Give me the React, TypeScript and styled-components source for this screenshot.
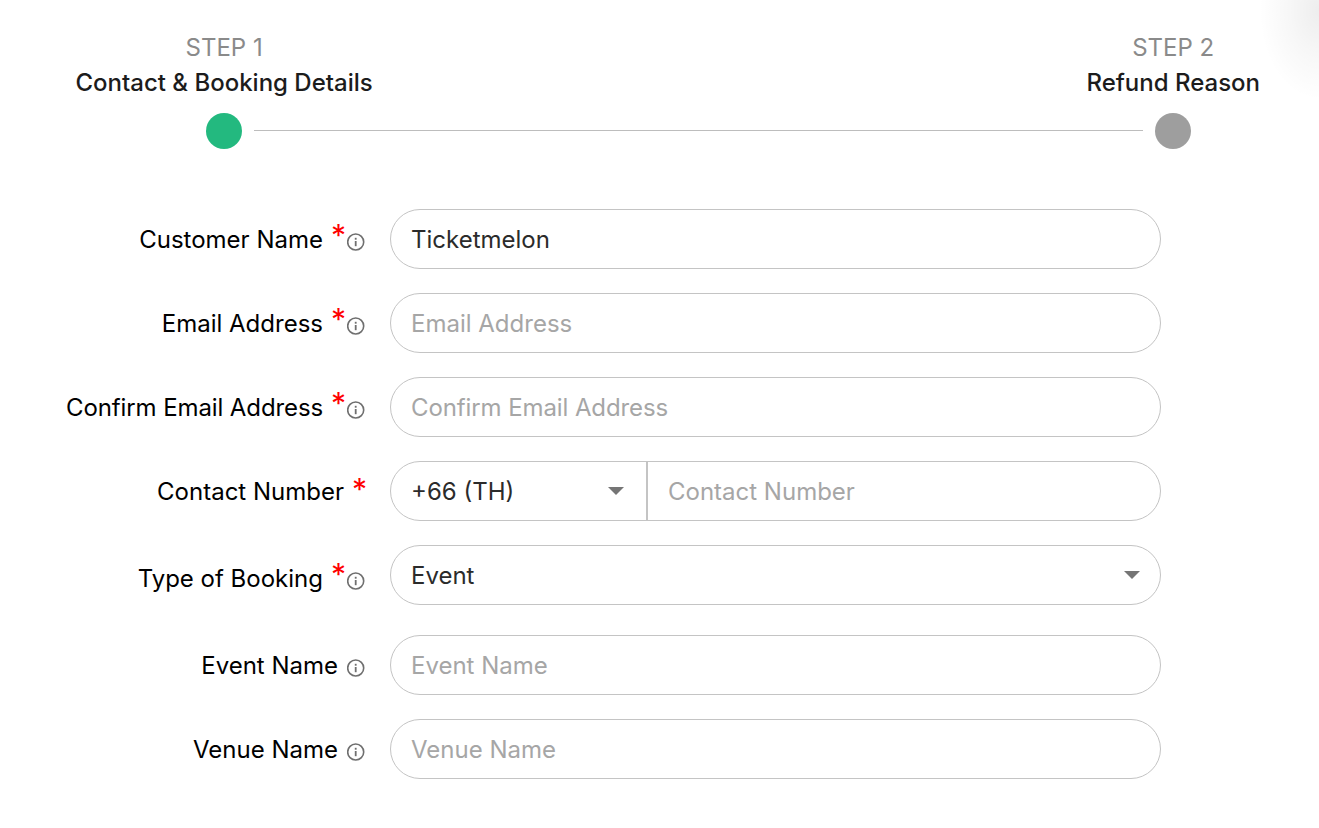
import React from 'react'
import styled, { createGlobalStyle } from 'styled-components'

const GlobalStyle = createGlobalStyle`
  html, body {
    margin: 0;
    padding: 0;
    background: #fff;
    font-family: Inter, 'Noto Sans', sans-serif;
  }
  * {
    box-sizing: border-box;
  }
`

const Page = styled.div`
  position: relative;
  width: 1319px;
  height: 828px;
  overflow: hidden;
  background: #fff;
`

const CornerShade = styled.div`
  position: absolute;
  top: -80px;
  right: -60px;
  width: 120px;
  height: 180px;
  background: radial-gradient(ellipse closest-side, rgba(0, 0, 0, 0.07) 0%, rgba(0, 0, 0, 0.03) 50%, rgba(0, 0, 0, 0) 100%);
`

const Stepper = styled.div`
  display: flex;
  align-items: flex-end;
  padding: 33px 59px 0 75.5px;
`

const Step = styled.div`
  display: flex;
  flex-direction: column;
  align-items: center;
  flex-shrink: 0;
`

const StepNumber = styled.div`
  font-size: 24px;
  line-height: 30px;
  color: #8a8a8a;
`

const StepTitle = styled.div`
  margin-top: 5px;
  font-size: 24px;
  font-weight: 500;
  line-height: 30px;
  color: #1c1c1c;
`

const Dot = styled.div<{ $active?: boolean }>`
  width: 36px;
  height: 36px;
  margin-top: 15px;
  border-radius: 50%;
  background: ${({ $active }) => ($active ? '#23b97f' : '#9e9e9e')};
`

// the line runs under the step titles, from dot to dot
const Line = styled.div`
  flex: 1;
  height: 1px;
  margin: 0 -57px 18px -118.5px;
  background: #bdbdbd;
`

const Form = styled.form`
  display: flex;
  flex-direction: column;
  gap: 24px;
  margin-top: 60px;
`

const Row = styled.div<{ $spaced?: boolean }>`
  display: flex;
  align-items: center;
  margin-bottom: ${({ $spaced }) => ($spaced ? '6px' : '0')};
`

const Label = styled.label<{ $drop?: number; $tight?: boolean }>`
  display: flex;
  align-items: center;
  justify-content: flex-end;
  width: 365px;
  margin-right: 25px;
  padding-top: ${({ $drop }) => $drop ?? 2}px;
  flex-shrink: 0;
  font-size: 24px;
  line-height: 30px;
  letter-spacing: ${({ $tight }) => ($tight ? '-0.1px' : '0')};
  color: #000;
  white-space: nowrap;
`

const Star = styled.span<{ $last?: boolean }>`
  margin-left: 8px;
  margin-right: ${({ $last }) => ($last ? '-2px' : '0')};
  margin-top: ${({ $last }) => ($last ? '-6px' : '-10px')};
  font-size: 30px;
  line-height: 30px;
  height: 30px;
  color: #f00;
`

const InfoIcon = styled.svg<{ $gap?: boolean }>`
  width: 18px;
  height: 18px;
  margin-left: ${({ $gap }) => ($gap ? '9px' : '1px')};
  margin-top: 3px;
  color: #6f6f6f;
  flex-shrink: 0;
`

const Field = styled.div`
  display: flex;
  align-items: center;
  width: 771px;
  height: 60px;
  border: 1px solid #c4c4c4;
  border-radius: 30px;
  background: #fff;
  font-size: 24px;
`

const TextInput = styled.input<{ $tight?: boolean }>`
  flex: 1;
  min-width: 0;
  height: 100%;
  padding: 0 20px;
  border: 0;
  outline: 0;
  background: transparent;
  font: inherit;
  letter-spacing: ${({ $tight }) => ($tight ? '-0.1px' : '0')};
  color: #2b2b2b;

  &::placeholder {
    color: #a6a6a6;
    opacity: 1;
  }
`

const Prefix = styled.div`
  display: flex;
  align-items: center;
  justify-content: space-between;
  width: 257px;
  height: 100%;
  flex-shrink: 0;
  padding: 0 22px 0 20px;
  border-right: 2px solid #c4c4c4;
  color: #2b2b2b;
`

const SelectValue = styled.div`
  display: flex;
  align-items: center;
  justify-content: space-between;
  width: 100%;
  height: 100%;
  padding: 0 20px;
  color: #2b2b2b;
`

const Caret = styled.span`
  width: 0;
  height: 0;
  border-left: 8px solid transparent;
  border-right: 8px solid transparent;
  border-top: 8px solid #757575;
`

const Info: React.FC<{ gap?: boolean }> = ({ gap }) => (
  <InfoIcon $gap={gap} viewBox="0 0 18 18" fill="none">
    <circle cx="8.7" cy="9" r="8" stroke="currentColor" strokeWidth="1.6" />
    <rect x="7.8" y="8" width="1.8" height="5.2" fill="currentColor" />
    <rect x="7.8" y="4.8" width="1.8" height="1.9" fill="currentColor" />
  </InfoIcon>
)

const App: React.FC = () => {
  return (
    <Page>
      <GlobalStyle />
      <CornerShade />
      <Stepper>
        <Step>
          <StepNumber>STEP 1</StepNumber>
          <StepTitle>Contact &amp; Booking Details</StepTitle>
          <Dot $active />
        </Step>
        <Line />
        <Step>
          <StepNumber>STEP 2</StepNumber>
          <StepTitle>Refund Reason</StepTitle>
          <Dot />
        </Step>
      </Stepper>
      <Form>
        <Row>
          <Label>
            Customer Name<Star>*</Star>
            <Info />
          </Label>
          <Field>
            <TextInput defaultValue="Ticketmelon" />
          </Field>
        </Row>
        <Row>
          <Label>
            Email Address<Star>*</Star>
            <Info />
          </Label>
          <Field>
            <TextInput placeholder="Email Address" />
          </Field>
        </Row>
        <Row>
          <Label $tight>
            Confirm Email Address<Star>*</Star>
            <Info />
          </Label>
          <Field>
            <TextInput $tight placeholder="Confirm Email Address" />
          </Field>
        </Row>
        <Row>
          <Label>
            Contact Number<Star $last>*</Star>
          </Label>
          <Field>
            <Prefix>
              +66 (TH)
              <Caret />
            </Prefix>
            <TextInput placeholder="Contact Number" />
          </Field>
        </Row>
        <Row $spaced>
          <Label $drop={8}>
            Type of Booking<Star>*</Star>
            <Info />
          </Label>
          <Field>
            <SelectValue>
              Event
              <Caret />
            </SelectValue>
          </Field>
        </Row>
        <Row>
          <Label>
            Event Name
            <Info gap />
          </Label>
          <Field>
            <TextInput placeholder="Event Name" />
          </Field>
        </Row>
        <Row>
          <Label>
            Venue Name
            <Info gap />
          </Label>
          <Field>
            <TextInput placeholder="Venue Name" />
          </Field>
        </Row>
      </Form>
    </Page>
  )
}

export default App
